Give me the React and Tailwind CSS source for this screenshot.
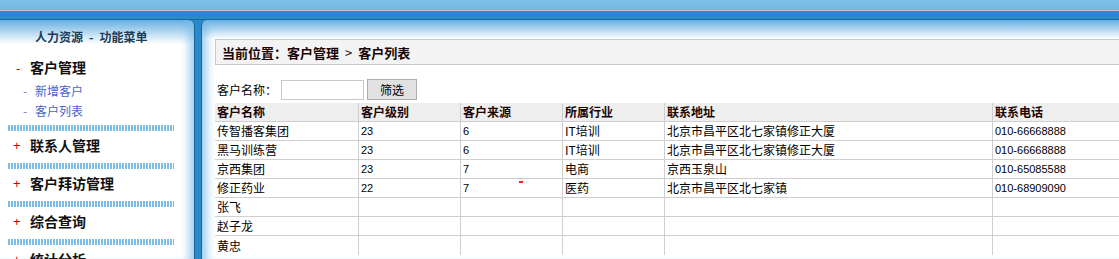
const cjk = "font-['Noto_Sans_CJK_SC','Noto_Sans',sans-serif]";

const menuGroups = ["联系人管理", "客户拜访管理", "综合查询", "统计分析"];

const columns = ["客户名称", "客户级别", "客户来源", "所属行业", "联系地址", "联系电话"];

const rows = [
  ["传智播客集团", "23", "6", "IT培训", "北京市昌平区北七家镇修正大厦", "010-66668888"],
  ["黑马训练营", "23", "6", "IT培训", "北京市昌平区北七家镇修正大厦", "010-66668888"],
  ["京西集团", "23", "7", "电商", "京西玉泉山", "010-65085588"],
  ["修正药业", "22", "7", "医药", "北京市昌平区北七家镇", "010-68909090"],
  ["张飞", "", "", "", "", ""],
  ["赵子龙", "", "", "", "", ""],
  ["黄忠", "", "", "", "", ""],
];

const gridCols = "grid grid-cols-[144px_102px_102px_102px_328px_150px]";

const Stripe = () => (
  <div className="ml-[8px] h-[6px] w-[166px] bg-[image:repeating-linear-gradient(90deg,#7dbde6_0px,#7dbde6_2px,#ffffff_2px,#ffffff_3px)]" />
);

const Sidebar = () => (
  <aside className="h-[239px] w-[195px] shrink-0 overflow-hidden rounded-tr-[6px] border-r border-[#17689f] bg-[linear-gradient(180deg,#68b0e2_0px,#ffffff_24px)] shadow-[inset_-10px_0_8px_-5px_rgba(120,185,232,0.7)]">
    <div className="flex h-[34px] items-center pl-[35px] text-[12px] font-bold leading-none text-[#213a57]">
      <span>人力资源</span>
      <span className="mx-[6px]">-</span>
      <span>功能菜单</span>
    </div>
    <div className="flex h-[26px] items-center leading-none">
      <span className="w-[30px] pl-[16px] text-[13px] text-[#e00000]">-</span>
      <span className="text-[14px] font-bold text-[#111]">客户管理</span>
    </div>
    <div className="mt-px flex h-[20px] items-center pl-[23px] text-[12px] leading-none">
      <span className="w-[12px] text-[#6b7fc4]">-</span>
      <span className="text-[#4d63c6]">新增客户</span>
    </div>
    <div className="flex h-[20px] items-center pl-[23px] text-[12px] leading-none">
      <span className="w-[12px] text-[#6b7fc4]">-</span>
      <span className="text-[#4d63c6]">客户列表</span>
    </div>
    <div className="mt-[4px]">
      <Stripe />
    </div>
    {menuGroups.map((name) => (
      <div key={name}>
        <div className="flex h-[32px] items-center pb-[4px] pl-[13px] leading-none">
          <span className="w-[17px] font-['Liberation_Sans',sans-serif] text-[13px] text-[#e00000]">+</span>
          <span className="text-[14px] font-bold text-[#111]">{name}</span>
        </div>
        <Stripe />
      </div>
    ))}
  </aside>
);

const CustomerTable = () => (
  <div className="mt-[3px] w-[928px]">
    <div className={`${gridCols} bg-[#eeeeee]`}>
      {columns.map((c) => (
        <div
          key={c}
          className="flex h-[19px] items-center border-r border-b border-[#cfcfcf] pl-[2px] text-[12px] font-bold leading-none text-[#1a0505]"
        >
          {c}
        </div>
      ))}
    </div>
    {rows.map((r, i) => (
      <div key={i} className={gridCols}>
        {r.map((v, j) => {
          const isNum = j === 1 || j === 2 || j === 5;
          return (
            <div
              key={j}
              className={`relative flex h-[19px] items-center border-r border-[#cfcfcf] pl-[2px] leading-none text-black ${
                i === rows.length - 1 ? "" : "border-b"
              } ${isNum ? "font-['Liberation_Sans',sans-serif] text-[11px]" : "text-[12px]"}`}
            >
              {v}
              {i === 3 && j === 2 && (
                <span className="absolute top-[2px] left-[58px] h-[2px] w-[4px] bg-[#ff2020]" />
              )}
            </div>
          );
        })}
      </div>
    ))}
  </div>
);

export default function App() {
  return (
    <div className={`h-[259px] w-[1119px] overflow-hidden bg-[#2a8ac8] ${cjk}`}>
      <div className="h-[10px] bg-[linear-gradient(180deg,#80c1ea,#74b7e3)]" />
      <div className="h-px bg-[#bcc7cf]" />
      <div className="h-[8px] bg-[#2b8bc9]" />
      <div className="h-px bg-[#17689f]" />
      <div className="flex gap-[6px]">
        <Sidebar />
        <main className="h-[239px] w-[960px] shrink-0 overflow-hidden rounded-tl-[6px] border-l border-[#17689f] bg-[linear-gradient(180deg,#68b0e2_0px,#ffffff_19px)] pt-[19px] pl-[13px] shadow-[inset_10px_0_8px_-5px_rgba(120,185,232,0.7)]">
          <div className="flex h-[26px] items-center border-y border-l border-[#c8c8c8] bg-[#f3f3f3] pl-[6px] text-[13px] font-bold leading-none text-[#1a0505]">
            <span>当前位置：客户管理</span>
            <span className="mx-[6px] font-normal">&gt;</span>
            <span>客户列表</span>
          </div>
          <div className="mt-[14px] flex h-[21px] items-center text-[12px] leading-none text-black">
            <span className="w-[66px] pl-[2px]">客户名称：</span>
            <input className="h-[20px] w-[83px] border border-[#c8c8c8] bg-white outline-none" />
            <button className="ml-[3px] h-[21px] w-[50px] border border-[#adadad] bg-[#e1e1e1] text-[12px] leading-none text-black">
              筛选
            </button>
          </div>
          <CustomerTable />
        </main>
      </div>
    </div>
  );
}
